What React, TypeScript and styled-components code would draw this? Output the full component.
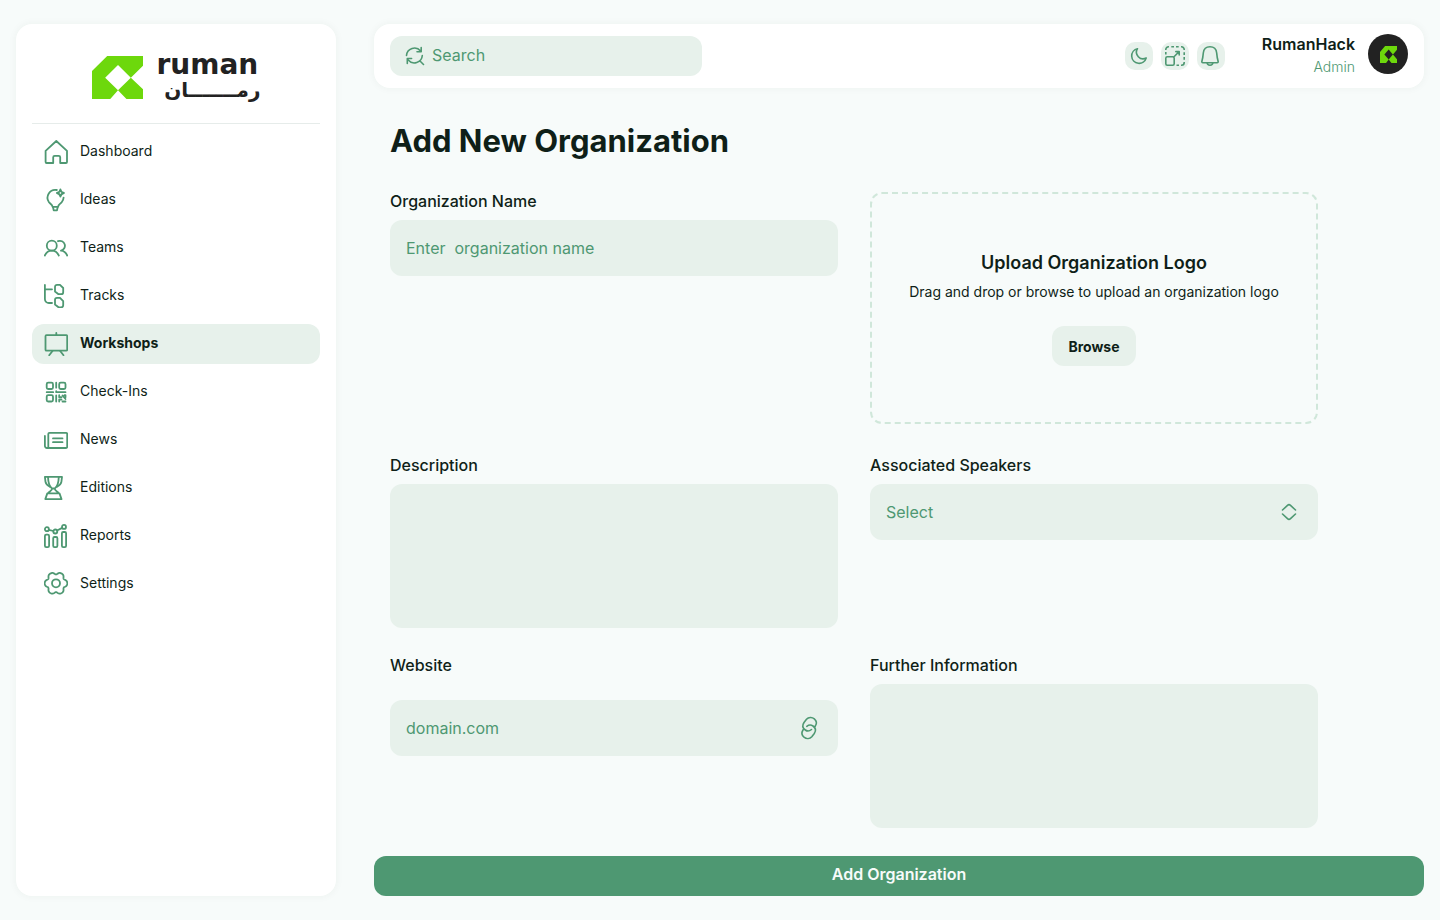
import React from "react";
import styled, { createGlobalStyle } from "styled-components";

const color = {
  page: "#f7fbfa",
  card: "#ffffff",
  field: "#e7f1eb",
  green: "#4e9872",
  ink: "#0f1f18",
  dash: "#d0e7da",
  line: "#e6ecea",
  lime: "#6dd80c",
  dark: "#222222",
};

const GlobalStyle = createGlobalStyle`
  *, *::before, *::after { box-sizing: border-box; }
  body {
    margin: 0;
    background: ${color.page};
    color: ${color.ink};
    font-family: Inter, "Liberation Sans", sans-serif;
  }
  button, input, textarea, select { font: inherit; color: inherit; }
`;

const Page = styled.div`
  display: flex;
  gap: 38px;
  min-height: 100vh;
  padding: 24px 16px;
`;

const Sidebar = styled.aside`
  flex: 0 0 320px;
  padding: 32px 16px;
  border-radius: 16px;
  background: ${color.card};
  box-shadow: 0 0 8px rgba(20, 60, 40, 0.05);
`;

const Brand = styled.a`
  display: flex;
  justify-content: center;
  gap: 14px;
  height: 68px;
  border-bottom: 1px solid ${color.line};
  color: ${color.dark};
  text-decoration: none;
`;

const Wordmark = styled.span`
  display: flex;
  flex-direction: column;
  gap: 4px;
  width: 104px;
  font-family: "DejaVu Sans", sans-serif;
  font-weight: 700;
  white-space: nowrap;
`;

const LatinName = styled.span`
  font-size: 28px;
  line-height: 18px;
`;

const ArabicName = styled.span`
  font-size: 20px;
  line-height: 24px;
  text-align: right;
`;

const NavList = styled.ul`
  display: flex;
  flex-direction: column;
  gap: 8px;
  margin: 8px 0 0;
  padding: 0;
  list-style: none;
`;

const NavLink = styled.a<{ $active?: boolean }>`
  display: flex;
  align-items: center;
  gap: 12px;
  height: 40px;
  padding: 0 12px;
  border-radius: 12px;
  background: ${(p) => (p.$active ? color.field : "transparent")};
  color: ${color.ink};
  font-size: 14px;
  font-weight: ${(p) => (p.$active ? 700 : 400)};
  line-height: 20px;
  text-decoration: none;
`;

const NavText = styled.span`
  padding-bottom: 2px;
`;

const Icon = styled.svg`
  flex: none;
  fill: none;
  stroke: ${color.green};
  stroke-width: 1.6;
  stroke-linecap: round;
  stroke-linejoin: round;
`;

const NavIcon = styled(Icon)`
  stroke-width: 1.8;
`;

const Main = styled.main`
  display: flex;
  flex: 1;
  flex-direction: column;
  min-width: 0;
`;

const TopBar = styled.header`
  display: flex;
  align-items: center;
  justify-content: space-between;
  height: 64px;
  padding: 0 16px;
  border-radius: 16px;
  background: ${color.card};
  box-shadow: 0 0 8px rgba(20, 60, 40, 0.05);
`;

const BareInput = styled.input`
  flex: 1;
  min-width: 0;
  padding: 0;
  border: 0;
  outline: 0;
  background: transparent;
  font-size: 16px;
  line-height: 20px;
  &::placeholder { color: ${color.green}; opacity: 1; }
`;

const SearchBox = styled.label`
  display: flex;
  align-items: center;
  gap: 7px;
  width: 312px;
  height: 40px;
  padding: 0 15px;
  border-radius: 12px;
  background: ${color.field};

  ${BareInput} { padding-bottom: 3px; }
`;

const TopActions = styled.div`
  display: flex;
  align-items: center;
  gap: 8px;
`;

const IconButton = styled.button`
  display: grid;
  place-items: center;
  width: 28px;
  height: 28px;
  padding: 0;
  border: 0;
  border-radius: 10px;
  background: ${color.field};
`;

const Account = styled.div`
  display: flex;
  align-items: center;
  gap: 13px;
  margin-left: 29px;
  padding-bottom: 4px;
`;

const AccountText = styled.div`
  display: flex;
  flex-direction: column;
  gap: 3px;
  padding-top: 3px;
  text-align: right;
`;

const AccountName = styled.strong`
  font-size: 16px;
  font-weight: 600;
  line-height: 20px;
`;

const AccountRole = styled.span`
  color: ${color.green};
  font-size: 14px;
  font-weight: 300;
  line-height: 20px;
`;

const Avatar = styled.span`
  display: grid;
  place-items: center;
  width: 40px;
  height: 40px;
  border-radius: 50%;
  background: ${color.dark};
`;

const Form = styled.form`
  display: flex;
  flex-direction: column;
`;

const Title = styled.h1`
  margin: 32px 16px;
  padding-top: 2px;
  font-size: 31px;
  font-weight: 700;
  line-height: 38px;
`;

const Fields = styled.div`
  display: grid;
  grid-template-columns: 1fr 1fr;
  gap: 28px 32px;
  align-items: start;
  max-width: 960px;
  margin-bottom: 28px;
  padding: 0 16px;
`;

const Field = styled.div<{ $gap?: number }>`
  display: flex;
  flex-direction: column;
  gap: ${(p) => p.$gap ?? 8}px;
`;

const Label = styled.label`
  padding-bottom: 2px;
  font-size: 16px;
  font-weight: 500;
  line-height: 18px;
`;

const Control = styled.div`
  display: flex;
  align-items: center;
  height: 56px;
  padding: 0 16px;
  border-radius: 12px;
  background: ${color.field};
`;

const Select = styled.select`
  flex: 1;
  height: 56px;
  padding: 0;
  border: 0;
  outline: 0;
  appearance: none;
  background: transparent;
  color: ${color.green};
  font-size: 16px;
`;

const TextArea = styled.textarea`
  display: block;
  height: 144px;
  padding: 16px;
  border: 0;
  border-radius: 12px;
  outline: 0;
  background: ${color.field};
  resize: none;
`;

const DropFrame = styled.div`
  display: flex;
  flex-direction: column;
  align-items: center;
  height: 232px;
  margin-bottom: 4px;
  padding: 58px 24px 0;
  border: 2px dashed ${color.dash};
  border-radius: 12px;
  text-align: center;
`;

const DropTitle = styled.h2`
  margin: 0 0 8px;
  font-size: 18px;
  font-weight: 600;
  line-height: 22px;
`;

const DropHint = styled.p`
  margin: 0 0 24px;
  font-size: 14px;
  line-height: 20px;
`;

const BrowseButton = styled.button`
  min-width: 84px;
  height: 40px;
  padding: 0 16px;
  border: 0;
  border-radius: 12px;
  background: ${color.field};
  font-size: 14px;
  font-weight: 700;
`;

const SubmitButton = styled.button`
  height: 40px;
  padding: 0 16px 4px;
  border: 0;
  border-radius: 12px;
  background: ${color.green};
  color: #f7fbfa;
  font-size: 16px;
  font-weight: 600;
`;

function Mark({ width, height }: { width: number; height: number }) {
  return (
    <svg width={width} height={height} viewBox="0 0 151 129" preserveAspectRatio="none" aria-hidden="true">
      <path
        fill={color.lime}
        fillRule="evenodd"
        d="M45 0H151V29L115 65L151 100V129H102L77 103L54 129H0V45ZM77 27L115 65L77 103L39 65Z"
      />
    </svg>
  );
}

// Six-lobed gear: the second harmonic flattens the lobes.
const gearOutline =
  Array.from({ length: 120 }, (_, i) => {
    const a = (i / 120) * Math.PI * 2;
    const r = 10.3 + 1.2 * Math.cos(6 * a) - 0.25 * Math.cos(12 * a);
    return `${i ? "L" : "M"}${(12 + r * Math.cos(a)).toFixed(2)} ${(11.3 + r * Math.sin(a)).toFixed(2)}`;
  }).join("") + "Z";

const navItems: { name: string; active?: boolean; art: React.ReactNode }[] = [
  {
    name: "Dashboard",
    art: <path d="M1.6 10.8 12.3 1 23 10.8V22a1 1 0 0 1-1 1h-5.8v-5.7a1.5 1.5 0 0 0-1.5-1.5h-4a1.5 1.5 0 0 0-1.5 1.5V23H2.6a1 1 0 0 1-1-1Z" />,
  },
  {
    name: "Ideas",
    art: (
      <>
        <path d="M12.8 2A7.8 7.8 0 0 0 5 14.2c1.3 1.7 3.2 2.4 3.6 4.6h5.4c.4-2.2 2.3-2.9 3.7-4.6 1.3-1.6 1.9-3 1.9-4.6" />
        <path d="m9 19 .7 3.4h3.3l.7-3.4" />
        <path d="M16.4 1.4c.4 2.5 1 3.1 3.5 3.6-2.5.5-3.1 1.1-3.5 3.5-.4-2.4-1-3-3.5-3.5 2.5-.5 3.1-1.1 3.5-3.6Z" />
      </>
    ),
  },
  {
    name: "Teams",
    art: (
      <>
        <circle cx="7.8" cy="9.7" r="5" />
        <path d="M.8 19.5C2 17 5 14.7 7.8 14.7s5.8 2.3 7 4.8M14 5.2a5 5 0 1 1 3 9.5c2.7.2 5 2.2 6.2 4.8" />
      </>
    ),
  },
  {
    name: "Tracks",
    art: (
      <>
        <path d="M.9.9V15a4 4 0 0 0 4 4H8M.9 5.3H8" />
        <path d="M13 .9h3L19.2 4v4.200a2 2 0 0 1-2 2H14.500L11 7.500V2.900a2 2 0 0 1 2-2ZM13 13.900h3l3.200 3.200v4.200a2 2 0 0 1-2 2H14.500L11 20.500V15.900a2 2 0 0 1 2-2Z" />
      </>
    ),
  },
  {
    name: "Workshops",
    active: true,
    art: (
      <>
        <rect x="1.5" y="3.2" width="21.7" height="15.5" rx="1" />
        <path d="M12.3.9v2.300M8.500 19 5.200 23.300M16.200 19l3.300 4.300" />
      </>
    ),
  },
  {
    name: "Check-Ins",
    art: (
      <>
        <rect x="2.7" y="2.7" width="6.3" height="6.3" rx="1.5" />
        <rect x="15.2" y="2.7" width="6.3" height="6.3" rx="1.5" />
        <rect x="2.7" y="15.2" width="6.3" height="6.3" rx="1.5" />
        <path d="M12.2 2.700v5M2.700 12.200h6.500M12.200 11.200v1h9.300M12.200 15.500v6M15.200 15.200v2h2.300M20.500 15.200h1v2M17.500 19.500h-2.300v2M18.500 15.500l3 3.500M18.500 21.500h3" />
      </>
    ),
  },
  {
    name: "News",
    art: (
      <>
        <rect x="4.3" y="4.8" width="18.9" height="15.2" rx="1.2" />
        <path d="M4.5 20H2.900a2 2 0 0 1-2-2V8M9 10.400h9.500M9 14.200h9.500" />
      </>
    ),
  },
  {
    name: "Editions",
    art: (
      <>
        <path d="M.9.9H18l-.6 4.900c-.4 2.600-2.400 3.800-4.400 5M.9.9l.6 4.900c.4 2.600 2.400 3.800 4.400 5" />
        <path d="M4 .9c.2 6 1.200 9.600 4 11.600h2.800c2.800-2 3.800-5.600 4-11.600M8 12.500c.5 2.500-3.200 2.500-4 4.900M10.800 12.500c-.5 2.500 3.200 2.500 4 4.900M3.300 17.400h12.200l2 5.700H1.300Z" />
      </>
    ),
  },
  {
    name: "Reports",
    art: (
      <>
        <circle cx="2.9" cy="5.2" r="2" />
        <circle cx="11.3" cy="7.5" r="2" />
        <circle cx="20" cy="2.9" r="2" />
        <path d="m4.800 5.800 4.600 1.200M13.100 6.500l5.100-2.600" />
        <rect x=".9" y="10.7" width="4.2" height="12.4" rx="1.3" />
        <rect x="9.2" y="13" width="4.2" height="10.1" rx="1.3" />
        <rect x="17.9" y="8" width="4.2" height="15.1" rx="1.3" />
      </>
    ),
  },
  {
    name: "Settings",
    art: (
      <>
        <path d={gearOutline} />
        <circle cx="12" cy="11.3" r="4" />
      </>
    ),
  },
];

export default function App() {
  return (
    <>
      <GlobalStyle />
      <Page>
        <Sidebar>
          <Brand href="#">
            <Mark width={51} height={43} />
            <Wordmark>
              <LatinName>ruman</LatinName>
              <ArabicName lang="ar" dir="rtl">رمـــــــان</ArabicName>
            </Wordmark>
          </Brand>
          <nav>
            <NavList>
              {navItems.map((item) => (
                <li key={item.name}>
                  <NavLink href="#" $active={item.active} aria-current={item.active ? "page" : undefined}>
                    <NavIcon width="24" height="24" viewBox="0 0 24 24" aria-hidden="true">
                      {item.art}
                    </NavIcon>
                    <NavText>{item.name}</NavText>
                  </NavLink>
                </li>
              ))}
            </NavList>
          </nav>
        </Sidebar>

        <Main>
          <TopBar>
            <SearchBox>
              <Icon width="20" height="20" viewBox="0 0 20 20" aria-hidden="true">
                <path d="M1.5 9.500A8 8 0 0 1 15.600 5M16.200 1.500v4.300H12M17.300 9.500A8 8 0 0 1 3.200 14M2.300 17.500v-5h4.300M15 15l3.500 3.500" />
              </Icon>
              <BareInput type="search" placeholder="Search" aria-label="Search" />
            </SearchBox>
            <TopActions>
              <IconButton type="button" aria-label="Dark mode">
                <Icon width="20" height="20" viewBox="0 0 20 20" aria-hidden="true">
                  <path d="M8.500 2.700A7.400 7.400 0 1 0 17.200 12 6.600 6.600 0 0 1 8.500 2.700Z" />
                </Icon>
              </IconButton>
              <IconButton type="button" aria-label="Full screen">
                <Icon width="20" height="20" viewBox="0 0 20 20" aria-hidden="true">
                  <rect x=".8" y="10.8" width="8.4" height="8.4" rx="1.5" />
                  <path d="m9 10.800 5-5M10.800 5.600h3.400V9" />
                  <path
                    strokeLinecap="butt"
                    d="M.8 8.500V6M.8 4V3.500A2.700 2.700 0 0 1 3.500.8H4M6.300.8h2.700M11 .8h2.700M16 .8h.5a2.700 2.700 0 0 1 2.700 2.700V4M19.200 6.300v2.700M19.200 11v2.700M19.200 16v.5a2.700 2.700 0 0 1-2.700 2.700H16M14 19.200h-2.500"
                  />
                </Icon>
              </IconButton>
              <IconButton type="button" aria-label="Notifications">
                <Icon width="20" height="20" viewBox="1 0 20 20" aria-hidden="true">
                  <path d="M10 .8c-3.700 0-6.300 2.500-6.700 6.200C3 10.500 2.900 12 2 14.800c-.4 1.200-.1 1.900 1 1.900h14c1.100 0 1.400-.7 1-1.900C17.100 12 17 10.500 16.700 7 16.300 3.300 13.700.8 10 .8ZM7 16.800c.3 3.200 5.700 3.200 6 0" />
                </Icon>
              </IconButton>
              <Account>
                <AccountText>
                  <AccountName>RumanHack</AccountName>
                  <AccountRole>Admin</AccountRole>
                </AccountText>
                <Avatar>
                  <Mark width={17} height={17} />
                </Avatar>
              </Account>
            </TopActions>
          </TopBar>

          <Form>
            <Title>Add New Organization</Title>
            <Fields>
              <Field>
                <Label htmlFor="org-name">Organization Name</Label>
                <Control>
                  <BareInput id="org-name" type="text" placeholder="Enter  organization name" />
                </Control>
              </Field>
              <DropFrame>
                <DropTitle>Upload Organization Logo</DropTitle>
                <DropHint>Drag and drop or browse to upload an organization logo</DropHint>
                <BrowseButton type="button">Browse</BrowseButton>
              </DropFrame>

              <Field>
                <Label htmlFor="description">Description</Label>
                <TextArea id="description" />
              </Field>
              <Field>
                <Label htmlFor="speakers">Associated Speakers</Label>
                <Control>
                  <Select id="speakers" defaultValue="">
                    <option value="">Select</option>
                  </Select>
                  <Icon width="24" height="24" viewBox="1 0 24 24" aria-hidden="true">
                    <path d="m5.500 10 5-4.700q1.500-1.300 3 0l5 4.700M5.500 14l5 4.700q1.500 1.300 3 0l5-4.700" />
                  </Icon>
                </Control>
              </Field>

              <Field $gap={24}>
                <Label htmlFor="website">Website</Label>
                <Control>
                  <BareInput id="website" type="url" placeholder="domain.com" />
                  <Icon width="24" height="24" viewBox="-1 0 24 24" aria-hidden="true">
                    <path d="M12.500 13.500C10.500 15.200 8 15.300 6.300 14 3.500 12 3.300 9 5 6.500L7.500 3.300C9.500 1 13 .8 15.300 2.800c2.300 2 2.700 4.700 1 7.200l-.6 1M7.800 10.300C9.500 9 12 8.700 14 10c2.800 2 3 5 1.300 7.500l-2.500 3.200c-2 2.300-5.300 2.500-7.800.5-2.300-2-2.600-4.700-1-7.200l.7-1" />
                  </Icon>
                </Control>
              </Field>
              <Field>
                <Label htmlFor="further">Further Information</Label>
                <TextArea id="further" />
              </Field>
            </Fields>
            <SubmitButton type="submit">Add Organization</SubmitButton>
          </Form>
        </Main>
      </Page>
    </>
  );
}
